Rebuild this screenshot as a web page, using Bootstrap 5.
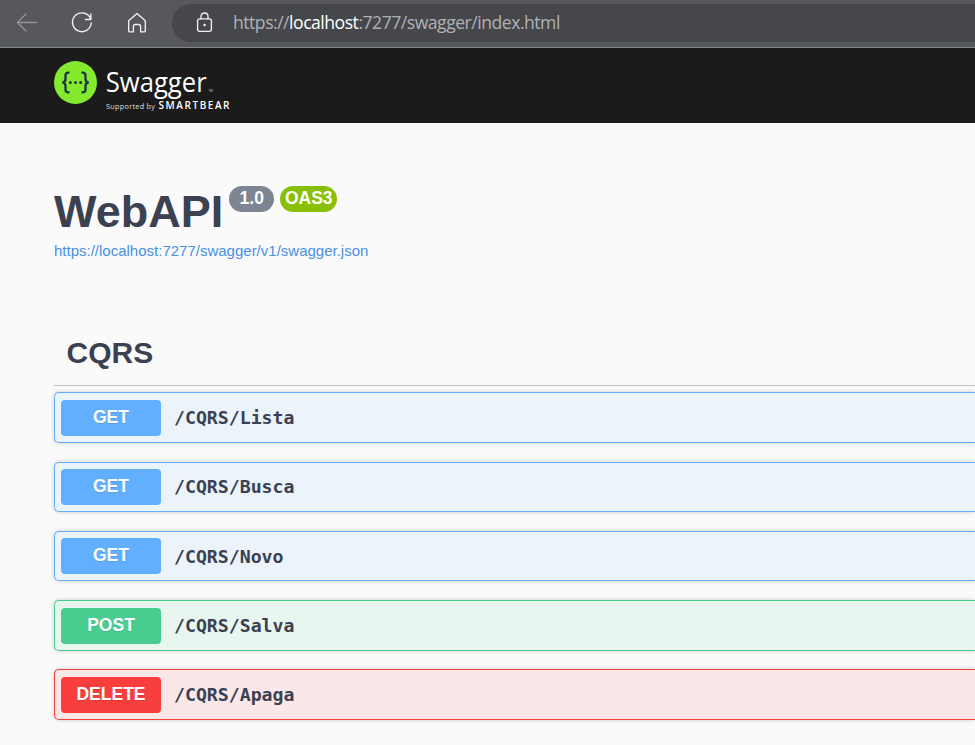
<!DOCTYPE html>
<html lang="en">
<head>
<meta charset="utf-8">
<title>Swagger UI</title>
<meta name="viewport" content="width=device-width, initial-scale=1">
<link href="https://cdn.jsdelivr.net/npm/bootstrap@5.3.0/dist/css/bootstrap.min.css" rel="stylesheet">
<style>
body{background:#fafafa;color:#3b4151;font-family:"Liberation Sans",Arial,sans-serif;height:745px;overflow:hidden}
.browser-bar{height:48px;background:#57585c;border-bottom:1px solid #84878a;padding:4px 0 5px 15px}
.browser-tools{gap:31px}
.tool-icon{width:24px;height:24px;fill:none;stroke:#f1f1f1;stroke-width:1.35;stroke-linecap:round;stroke-linejoin:round}
.tool-icon.back{stroke:#929395}
.address{height:38px;margin-left:23px;padding-left:20px;background:#46474b;border-radius:19px 0 0 19px}
.url-text{font:17.6px/24px "Open Sans","Noto Sans",sans-serif;color:#b0b1b3;margin-left:17px;letter-spacing:-.49px;padding-bottom:2px}
.url-text span{color:#fff}
.topbar{height:75px;background:#1b1b1b;padding:0 0 0 54px}
.api-info{height:204px;padding:63px 0 0 54px}
.api-title{font-size:45px;line-height:52px;font-weight:700}
.pill{height:26px;border-radius:13px;color:#fff;font-size:17.5px;line-height:25px;font-weight:700;text-align:center}
.pill-version{width:45px;background:#7d8492;margin-left:6px}
.pill-oas{width:57px;background:#89bf04;margin-left:6px}
.api-link{color:#4990e2;font-size:15px;line-height:18px;width:max-content;margin-top:4px}
.operations{margin-left:54px}
.tag-title{height:59px;padding:6px 0 0 12.5px;border-bottom:1px solid rgba(59,65,81,.32);font-size:30px;line-height:40px;font-weight:700}
.op-list{padding-top:6.4px;gap:18.75px}
.op{height:50.5px;padding:.3px 0 0 6px;border:1px solid var(--tone);border-right:0;border-radius:5px 0 0 5px;background:var(--fill);box-shadow:0 0 4px rgba(0,0,0,.19)}
.op-get{--tone:#61affe;--fill:#ebf3fb}
.op-post{--tone:#49cc90;--fill:#e8f6f0}
.op-delete{--tone:#f93e3e;--fill:#fae7e7}
.method{width:100px;height:36px;border-radius:4px;background:var(--tone);color:#fff;font-size:17.5px;line-height:34.400px;font-weight:700;text-align:center;text-shadow:0 1px 0 rgba(0,0,0,.1)}
.path{font:700 18.2px/24px "DejaVu Sans Mono",monospace;margin-left:13px;padding-top:.6px}
</style>
<script src="https://cdn.jsdelivr.net/npm/bootstrap@5.3.0/dist/js/bootstrap.bundle.min.js"></script>
</head>
<body>
<header class="browser-bar d-flex align-items-center">
  <div class="browser-tools d-flex align-items-center">
    <svg class="tool-icon back" viewBox="0 -1 24 24"><path d="M21.500 10.500H2.500M11 2 2.300 10.500 11 19"/></svg>
    <svg class="tool-icon" viewBox="0 -1 24 24"><path d="M20.900 7.500A9.400 9.400 0 1 0 21.300 10.800M20.900 2v5.500h-5.500"/></svg>
    <svg class="tool-icon" viewBox="0 -1 24 24"><path d="M3.700 8.700 12 1.500l8.300 7.200v10.200q0 1-1 1h-3.700v-5.400q0-2-2-2h-3.200q-2 0-2 2v5.400H4.700q-1 0-1-1z"/></svg>
  </div>
  <div class="address flex-grow-1 d-flex align-items-center">
    <svg class="tool-icon" viewBox="0 -1 24 24"><rect x="5.600" y="6.800" width="13.800" height="12.500" rx="2"/><path d="M9 6.800V4.500q0-3.500 3.500-3.500T16 4.500V6.800"/><circle cx="12.500" cy="13" r="1" fill="#f1f1f1" stroke-width=".6"/></svg>
    <div class="url-text text-nowrap">https://<span>localhost</span>:7277/swagger/index.html</div>
  </div>
</header>
<nav class="topbar">
  <svg class="d-block" width="180" height="75" viewBox="0 0 180 75" role="img" aria-label="Swagger, supported by SmartBear">
    <circle cx="21.500" cy="34.500" r="21.500" fill="#85ea2d"/>
    <g fill="none" stroke="#173647" stroke-width="2.300"><path d="M15.500 24.700h-1.300q-2.700 0-2.700 2.700v3.600q0 3.500-3.300 3.500 3.300 0 3.300 3.500v3.600q0 2.700 2.700 2.700h1.300M27.500 24.700h1.300q2.700 0 2.700 2.700v3.600q0 3.500 3.300 3.500-3.300 0-3.300 3.500v3.600q0 2.700-2.700 2.700h-1.300"/></g>
    <g fill="#173647"><circle cx="16.300" cy="34.500" r="1.500"/><circle cx="21.500" cy="34.500" r="1.500"/><circle cx="26.700" cy="34.500" r="1.500"/></g>
    <g fill="#fff" font-family="Open Sans, sans-serif">
      <text x="51.700" y="43.500" font-size="27" textLength="101" lengthAdjust="spacingAndGlyphs">Swagger</text>
      <text x="154.500" y="43.500" font-size="3" fill="#ccc">TM</text>
      <text x="52" y="60.700" font-size="7.300" fill="#ddd" textLength="49" lengthAdjust="spacing">Supported by</text>
      <text x="104.500" y="60.700" font-size="10" font-weight="600" textLength="71" lengthAdjust="spacing">SMARTBEAR</text>
    </g>
  </svg>
</nav>
<main>
  <section class="api-info">
    <div class="d-flex align-items-start">
      <h1 class="api-title mb-0">WebAPI</h1>
      <span class="pill pill-version">1.0</span>
      <span class="pill pill-oas">OAS3</span>
    </div>
    <a class="api-link d-block text-decoration-none" href="#">https://localhost:7277/swagger/v1/swagger.json</a>
  </section>
  <section class="operations">
    <h2 class="tag-title mb-0">CQRS</h2>
    <div class="op-list d-flex flex-column">
      <div class="op op-get d-flex align-items-center"><span class="method">GET</span><span class="path">/CQRS/Lista</span></div>
      <div class="op op-get d-flex align-items-center"><span class="method">GET</span><span class="path">/CQRS/Busca</span></div>
      <div class="op op-get d-flex align-items-center"><span class="method">GET</span><span class="path">/CQRS/Novo</span></div>
      <div class="op op-post d-flex align-items-center"><span class="method">POST</span><span class="path">/CQRS/Salva</span></div>
      <div class="op op-delete d-flex align-items-center"><span class="method">DELETE</span><span class="path">/CQRS/Apaga</span></div>
    </div>
  </section>
</main>
</body>
</html>
